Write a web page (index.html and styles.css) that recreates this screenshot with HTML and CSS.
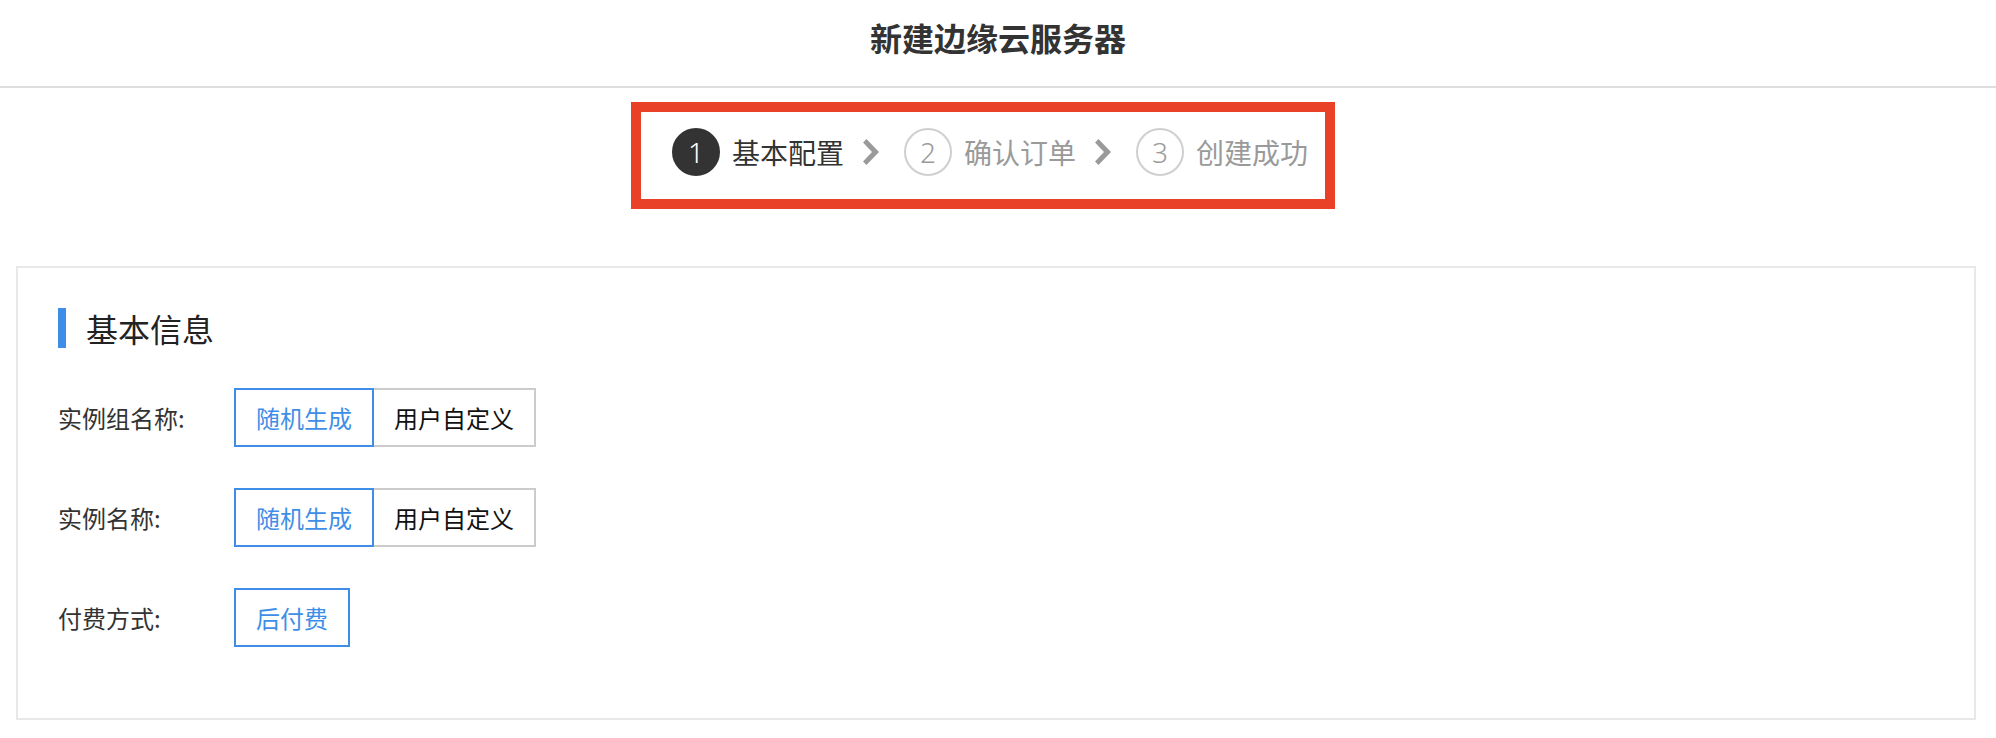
FILE: index.html
```html
<!DOCTYPE html>
<html lang="zh-CN">
<head>
    <meta charset="UTF-8">
    <meta name="viewport" content="width=device-width, initial-scale=1.0">
    <title>新建边缘云服务器</title>
    <link rel="stylesheet" href="styles.css">
</head>
<body>
    <div class="page-header">
        <h1>新建边缘云服务器</h1>
    </div>

    <div class="steps-wrap">
        <div class="steps">
            <div class="step active">
                <span class="step-num">1</span>
                <span class="step-label">基本配置</span>
            </div>
            <svg class="step-arrow" width="16" height="26" viewBox="0 0 16 26">
                <polygon points="0,3.5 3.5,0 16,13 3.5,26 0,22.5 9,13" fill="#9a9a9a"/>
            </svg>
            <div class="step">
                <span class="step-num">2</span>
                <span class="step-label">确认订单</span>
            </div>
            <svg class="step-arrow" width="16" height="26" viewBox="0 0 16 26">
                <polygon points="0,3.5 3.5,0 16,13 3.5,26 0,22.5 9,13" fill="#9a9a9a"/>
            </svg>
            <div class="step">
                <span class="step-num">3</span>
                <span class="step-label">创建成功</span>
            </div>
        </div>
    </div>

    <div class="card">
        <div class="section-title">基本信息</div>

        <div class="form-row">
            <div class="form-label">实例组名称:</div>
            <div class="btn-group">
                <button class="opt selected">随机生成</button>
                <button class="opt">用户自定义</button>
            </div>
        </div>

        <div class="form-row">
            <div class="form-label">实例名称:</div>
            <div class="btn-group">
                <button class="opt selected">随机生成</button>
                <button class="opt">用户自定义</button>
            </div>
        </div>

        <div class="form-row">
            <div class="form-label">付费方式:</div>
            <div class="btn-group">
                <button class="opt selected">后付费</button>
            </div>
        </div>
    </div>
</body>
</html>
```

FILE: styles.css
```css
body {
    margin: 0;
    font-family: "Noto Sans CJK SC", "Noto Sans", sans-serif;
    color: #333;
    background: #fff;
}

.page-header {
    height: 86px;
    border-bottom: 2px solid #dedede;
    text-align: center;
}

.page-header h1 {
    margin: 0;
    padding-top: 15px;
    font-size: 32px;
    line-height: 44px;
    font-weight: 600;
    color: #333;
}

.steps-wrap {
    display: flex;
    justify-content: center;
    margin-top: 14px;
}

.steps {
    display: flex;
    align-items: center;
    margin-right: 30px;
    padding: 16px 17px 23px 31px;
    border: 10px solid #e94128;
}

.step {
    display: flex;
    align-items: center;
    gap: 12px;
    color: #9a9a9a;
}

.step-num {
    width: 48px;
    height: 48px;
    box-sizing: border-box;
    border: 2px solid #cfcfcf;
    border-radius: 50%;
    display: flex;
    align-items: center;
    justify-content: center;
    font-family: "Noto Sans", sans-serif;
    font-size: 28px;
    font-weight: 300;
}

.step-label {
    font-size: 28px;
    line-height: 40px;
}

.step.active {
    color: #333;
}

.step.active .step-num {
    background: #333;
    border-color: #333;
    color: #fff;
}

.step-arrow {
    margin: 0 25px 0 19px;
}

.card {
    margin: 57px 20px 18px 16px;
    padding: 40px 40px 71px;
    border: 2px solid #e8e8e8;
}

.section-title {
    display: flex;
    align-items: center;
    gap: 20px;
    font-size: 32px;
    line-height: 40px;
    color: #222;
    margin-bottom: 40px;
}

.section-title::before {
    content: "";
    width: 8px;
    height: 40px;
    background: #3e8ee8;
}

.form-row {
    display: flex;
    align-items: center;
    margin-bottom: 41px;
}

.form-row:last-child {
    margin-bottom: 0;
}

.form-label {
    width: 176px;
    font-size: 24px;
    color: #333;
}

.btn-group {
    display: flex;
}

.opt {
    height: 59px;
    box-sizing: border-box;
    padding: 0 20px;
    border: 2px solid #cccccc;
    background: #fff;
    font-family: inherit;
    font-size: 24px;
    color: #111;
    cursor: pointer;
}

.opt + .opt {
    border-left: none;
}

.opt.selected {
    border-color: #3e8ee8;
    color: #3e8ee8;
}
```
